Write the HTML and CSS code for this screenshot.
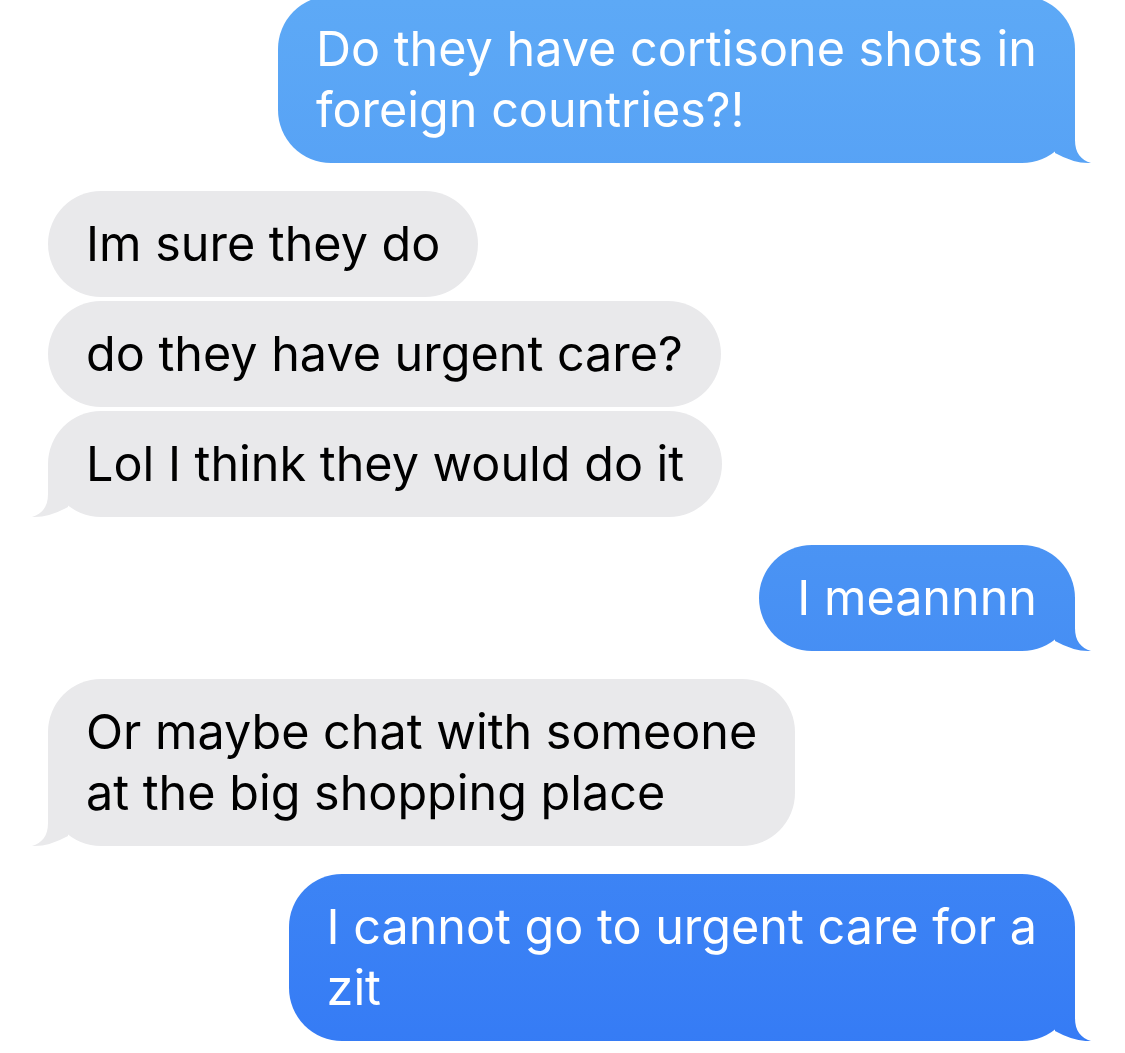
FILE: index.html
```html
<!DOCTYPE html>
<html>
<head>
<meta charset="utf-8">
<link rel="stylesheet" href="styles.css">
</head>
<body>
<div class="chat">
  <div class="row me first"><div class="bubble blue tail">Do they have cortisone shots in<br>foreign countries?!</div></div>
  <div class="row them gap-big"><div class="bubble gray">Im sure they do</div></div>
  <div class="row them gap-small"><div class="bubble gray">do they have urgent care?</div></div>
  <div class="row them gap-small"><div class="bubble gray tail">Lol I think they would do it</div></div>
  <div class="row me gap-big"><div class="bubble blue tail">I meannnn</div></div>
  <div class="row them gap-big"><div class="bubble gray tail">Or maybe chat with someone<br>at the big shopping place</div></div>
  <div class="row me gap-big"><div class="bubble blue tail">I cannot go to urgent care for a<br>zit</div></div>
</div>
</body>
</html>
```
FILE: styles.css
```css
html, body {
  margin: 0;
  padding: 0;
  background: #ffffff;
  overflow: hidden;
}
.chat {
  display: flex;
  flex-direction: column;
  width: 1125px;
}
.row {
  display: flex;
}
.row.first {
  margin-top: -4px;
}
.row.me {
  justify-content: flex-end;
  padding-right: 50px;
}
.row.them {
  justify-content: flex-start;
  padding-left: 48px;
}
.gap-big { margin-top: 28px; }
.gap-small { margin-top: 4px; }
.bubble {
  position: relative;
  font-family: Inter, "Liberation Sans", sans-serif;
  font-size: 48.5px;
  line-height: 61px;
  padding: 22px 38px 23px;
  border-radius: 53px;
  white-space: nowrap;
}
.blue {
  color: #ffffff;
  background: linear-gradient(180deg, #5da9f6 0px, #4a93f4 560px, #357bf5 1053px) fixed;
}
.gray {
  color: #000000;
  background: #e9e9eb;
}
.bubble.tail::after {
  content: "";
  position: absolute;
  bottom: 0;
  width: 40px;
  height: 54px;
}
.blue.tail::after {
  right: -18px;
  background: linear-gradient(180deg, #5da9f6 0px, #4a93f4 560px, #357bf5 1053px) fixed;
  clip-path: path('M22,0 L22,31 C22,44 28,51 38,54 Q22,55 2,44 L2,0 Z');
}
.gray.tail::after {
  left: -18px;
  background: #e9e9eb;
  clip-path: path('M18,0 L18,31 C18,44 12,51 2,54 Q18,55 38,44 L38,0 Z');
}
```
